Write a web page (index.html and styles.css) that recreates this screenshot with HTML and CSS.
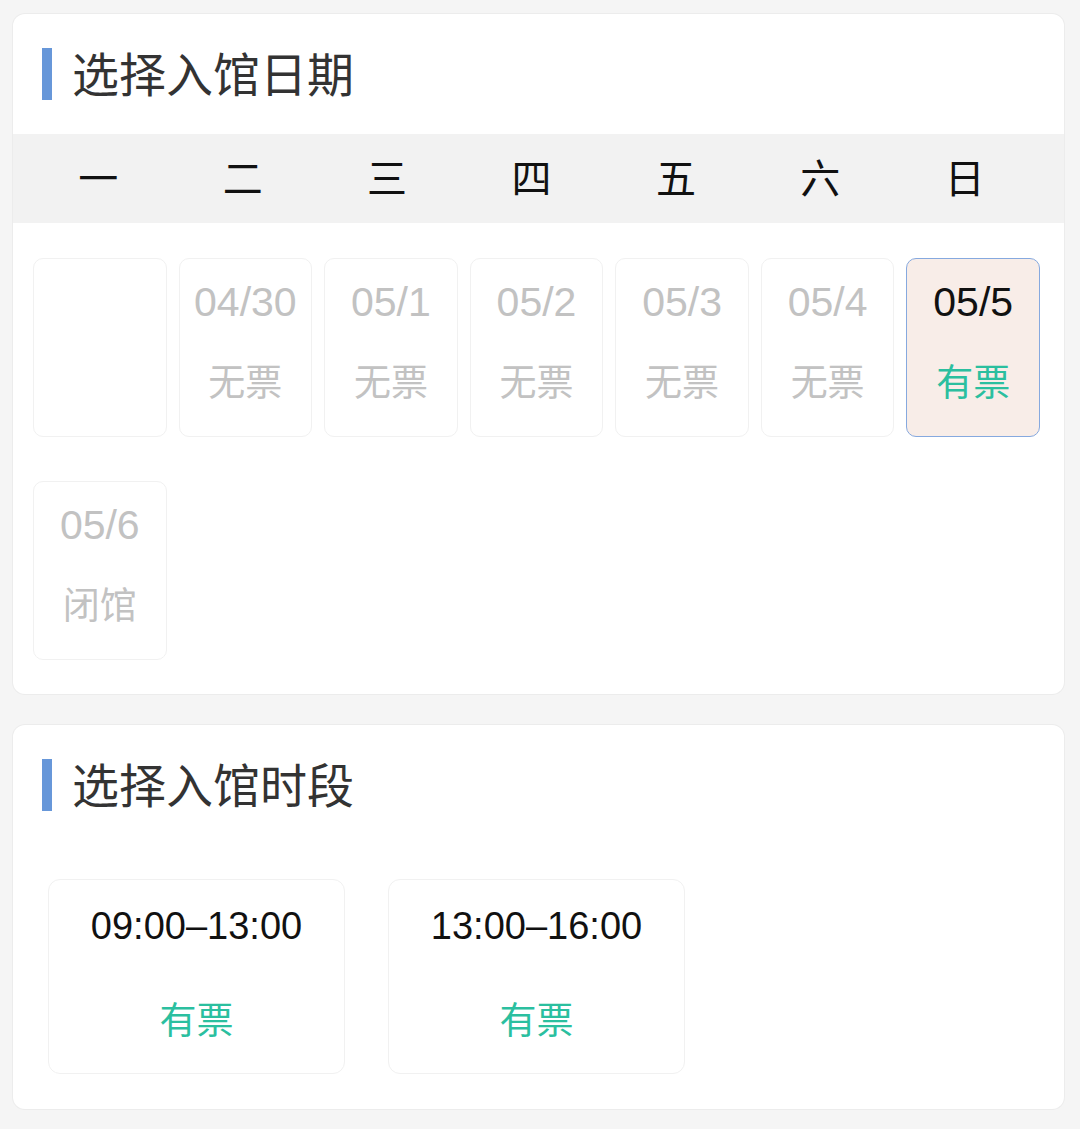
FILE: index.html
```html
<!DOCTYPE html>
<html lang="zh">
<head>
    <meta charset="UTF-8">
    <meta name="viewport" content="width=device-width, initial-scale=1.0">
    <title>选择入馆</title>
    <link rel="stylesheet" href="styles.css">
</head>
<body>
    <div class="card">
        <div class="title">
            <span class="bar"></span>
            <h2>选择入馆日期</h2>
        </div>
        <div class="week">
            <span>一</span>
            <span>二</span>
            <span>三</span>
            <span>四</span>
            <span>五</span>
            <span>六</span>
            <span>日</span>
        </div>
        <div class="dates">
            <div class="day empty"></div>
            <div class="day off"><p class="num">04/30</p><p class="state">无票</p></div>
            <div class="day off"><p class="num">05/1</p><p class="state">无票</p></div>
            <div class="day off"><p class="num">05/2</p><p class="state">无票</p></div>
            <div class="day off"><p class="num">05/3</p><p class="state">无票</p></div>
            <div class="day off"><p class="num">05/4</p><p class="state">无票</p></div>
            <div class="day active"><p class="num">05/5</p><p class="state">有票</p></div>
            <div class="day off"><p class="num">05/6</p><p class="state">闭馆</p></div>
        </div>
    </div>

    <div class="card">
        <div class="title">
            <span class="bar"></span>
            <h2>选择入馆时段</h2>
        </div>
        <div class="slots">
            <div class="slot"><p class="time">09:00–13:00</p><p class="state">有票</p></div>
            <div class="slot"><p class="time">13:00–16:00</p><p class="state">有票</p></div>
        </div>
    </div>
</body>
</html>
```

FILE: styles.css
```css
body{
    margin: 0;
    padding: 14px 16px 0 13px;
    background-color: #f5f5f5;
    font-family: "Liberation Sans", "Noto Sans CJK SC", sans-serif;
}
p{
    margin: 0;
}
.card{
    background-color: #fff;
    border-radius: 12px;
    box-shadow: 0 0 0 1px #ececec;
    margin-bottom: 31px;
    overflow: hidden;
}
.title{
    display: flex;
    align-items: center;
    padding: 34px 0 34px 29px;
}
.bar{
    width: 10px;
    height: 52px;
    background-color: #6797d9;
    margin-right: 20px;
}
.title h2{
    margin: 0;
    font-family: "Noto Sans CJK SC", sans-serif;
    font-weight: 400;
    font-size: 47px;
    line-height: 52px;
    color: #333;
    position: relative;
    top: -2px;
}
.week{
    display: grid;
    grid-template-columns: repeat(7, 1fr);
    padding: 0 27px 0 13px;
    height: 89px;
    align-items: center;
    background-color: #f2f2f2;
}
.week span{
    text-align: center;
    font-family: "Noto Sans CJK SC", sans-serif;
    font-size: 40px;
    line-height: 40px;
    color: #111;
    margin-bottom: 6px;
}
.dates{
    display: grid;
    grid-template-columns: repeat(7, 1fr);
    column-gap: 12px;
    row-gap: 44px;
    padding: 35px 24px 34px 20px;
}
.day{
    border: 1px solid #f1f1f1;
    border-radius: 10px;
    display: flex;
    flex-direction: column;
    align-items: center;
    padding-top: 15px;
    box-sizing: border-box;
    height: 179px;
}
.num{
    font-size: 41px;
    line-height: 56px;
    color: #111;
}
.day .state{
    margin-top: 22px;
    font-size: 37px;
    line-height: 56px;
    font-family: "Noto Sans CJK SC", sans-serif;
}
.off .num, .off .state{
    color: #c2c2c2;
}
.active{
    background-color: #f8ede8;
    border-color: #86a9df;
}
.active .state, .slot .state{
    color: #2bbf9f;
}
.slots{
    display: flex;
    gap: 43px;
    padding: 34px 35px 35px 35px;
}
.slot{
    width: 297px;
    height: 195px;
    box-sizing: border-box;
    border: 1px solid #f1f1f1;
    border-radius: 12px;
    display: flex;
    flex-direction: column;
    align-items: center;
    padding-top: 18px;
}
.time{
    font-size: 38px;
    line-height: 56px;
    color: #111;
}
.slot .state{
    margin-top: 36px;
    font-size: 37px;
    line-height: 56px;
    font-family: "Noto Sans CJK SC", sans-serif;
}
```
